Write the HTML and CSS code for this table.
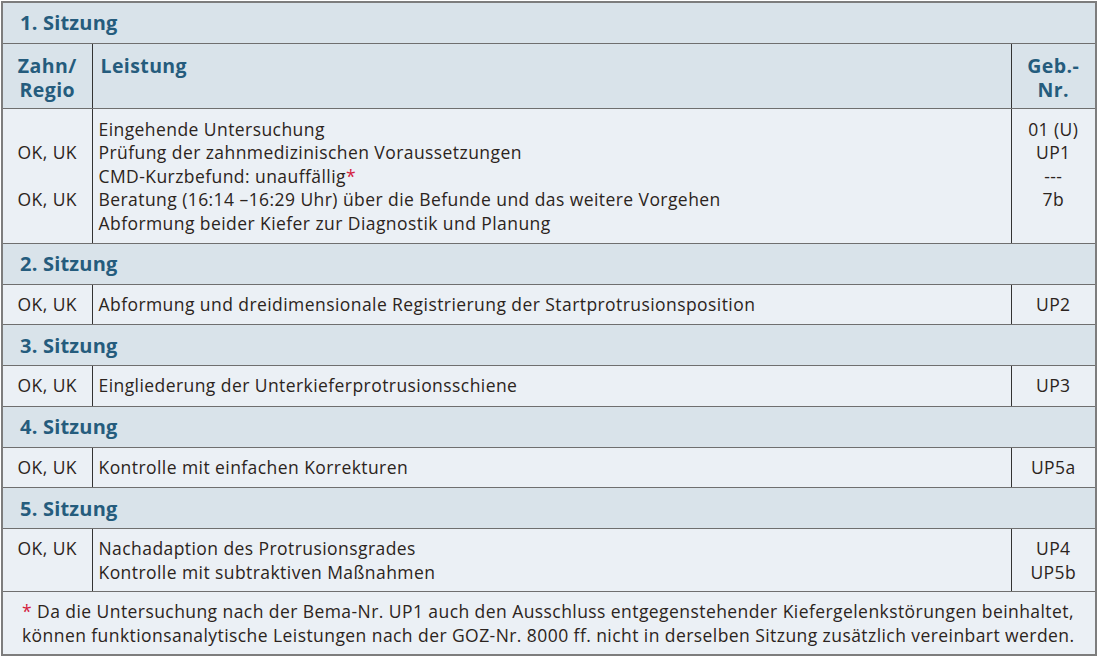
FILE: index.html
```html
<!DOCTYPE html>
<html lang="de">
<head>
<meta charset="utf-8">
<title>Sitzungen</title>
<link rel="stylesheet" href="styles.css">
</head>
<body>
<table class="plan">
  <colgroup>
    <col class="c-zahn">
    <col class="c-leist">
    <col class="c-geb">
  </colgroup>
  <tr class="sec"><td colspan="3">1. Sitzung</td></tr>
  <tr class="head">
    <th class="zahn">Zahn/<br>Regio</th>
    <th class="leist">Leistung</th>
    <th class="geb">Geb.-<br>Nr.</th>
  </tr>
  <tr class="body big">
    <td class="zahn"><br>OK, UK<br><br>OK, UK<br>&nbsp;</td>
    <td class="leist">Eingehende Untersuchung<br>Prüfung der zahnmedizinischen Voraussetzungen<br>CMD-Kurzbefund: unauffällig<span class="ast">*</span><br>Beratung (16:14 –16:29 Uhr) über die Befunde und das weitere Vorgehen<br>Abformung beider Kiefer zur Diagnostik und Planung</td>
    <td class="geb">01 (U)<br>UP1<br>---<br>7b<br>&nbsp;</td>
  </tr>
  <tr class="sec"><td colspan="3">2. Sitzung</td></tr>
  <tr class="body">
    <td class="zahn">OK, UK</td>
    <td class="leist">Abformung und dreidimensionale Registrierung der Startprotrusionsposition</td>
    <td class="geb">UP2</td>
  </tr>
  <tr class="sec"><td colspan="3">3. Sitzung</td></tr>
  <tr class="body">
    <td class="zahn">OK, UK</td>
    <td class="leist">Eingliederung der Unterkieferprotrusionsschiene</td>
    <td class="geb">UP3</td>
  </tr>
  <tr class="sec"><td colspan="3">4. Sitzung</td></tr>
  <tr class="body">
    <td class="zahn">OK, UK</td>
    <td class="leist">Kontrolle mit einfachen Korrekturen</td>
    <td class="geb">UP5a</td>
  </tr>
  <tr class="sec"><td colspan="3">5. Sitzung</td></tr>
  <tr class="body two">
    <td class="zahn">OK, UK<br>&nbsp;</td>
    <td class="leist">Nachadaption des Protrusionsgrades<br>Kontrolle mit subtraktiven Maßnahmen</td>
    <td class="geb">UP4<br>UP5b</td>
  </tr>
  <tr class="note">
    <td colspan="3"><span class="ast">*</span> Da die Untersuchung nach der Bema-Nr. UP1 auch den Ausschluss entgegenstehender Kiefergelenkstörungen beinhaltet,<br>können funktionsanalytische Leistungen nach der GOZ-Nr. 8000 ff. nicht in derselben Sitzung zusätzlich vereinbart werden.</td>
  </tr>
</table>
</body>
</html>
```
FILE: styles.css
```css
html, body {
  margin: 0;
  padding: 0;
  background: #ffffff;
}
body {
  padding: 1px 0 0 1px;
  font-family: "Open Sans", "Liberation Sans", sans-serif;
  color: #2b2420;
}
.plan {
  width: 1096px;
  border-collapse: collapse;
  border: 2px solid #7d7d7d;
  font-size: 17.5px;
  letter-spacing: 0.43px;
  line-height: 23.4px;
}
.c-zahn { width: 90px; }
.c-geb { width: 85px; }
.plan td, .plan th {
  padding: 0;
  border-top: 1px solid #6f6f6f;
  border-bottom: 1px solid #6f6f6f;
}
.sec td {
  background: #d9e3ea;
  color: #255c7d;
  font-weight: 700;
  font-size: 20px;
  letter-spacing: 0.2px;
  height: 40px;
  padding-left: 17px;
  vertical-align: middle;
}
.head th {
  background: #d9e3ea;
  color: #255c7d;
  font-weight: 700;
  font-size: 19.5px;
  letter-spacing: 0.4px;
  line-height: 24px;
  height: 65px;
  vertical-align: top;
  padding-top: 10px;
  box-sizing: border-box;
}
.head th.leist { text-align: left; padding-left: 8px; }
.zahn, .geb { text-align: center; }
.zahn { border-right: 1px solid #333333; }
.geb { border-left: 1px solid #333333; }
.body td {
  background: #ebf0f5;
  height: 39.4px;
  vertical-align: middle;
}
.body td.leist { padding-left: 6px; }
.big td {
  padding-top: 9px;
  padding-bottom: 8px;
  vertical-align: top;
}
.big td.leist { padding-left: 6px; }
.two td { padding-top: 8px; padding-bottom: 7px; }
.ast { color: #d4213d; }
.note td {
  background: #ebf0f5;
  padding: 7px 0 7px 19px;
  line-height: 24px;
}
```
